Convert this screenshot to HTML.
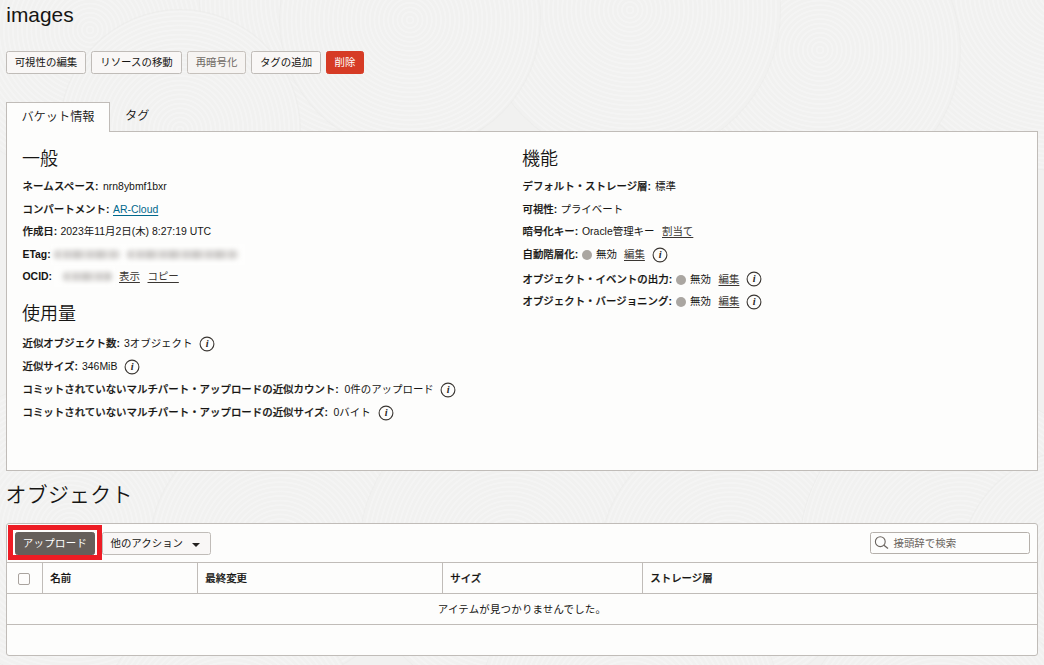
<!DOCTYPE html>
<html lang="ja">
<head>
<meta charset="utf-8">
<title>images - バケットの詳細</title>
<style>
*{box-sizing:border-box;margin:0;padding:0}
html,body{width:1044px;height:665px;overflow:hidden}
body{position:relative;background:#f1f1f0;color:#161513;
  font-family:"Liberation Sans","Noto Sans CJK JP",sans-serif;font-size:10.45px;line-height:14px}
.tex{position:absolute;left:0;top:0;width:1044px;height:665px;overflow:hidden;z-index:0}
.tex i{position:absolute;display:block;border-radius:50%;background:#f1f1f0 repeating-radial-gradient(circle,rgba(255,255,255,0) 0,rgba(255,255,255,0) 2.2px,rgba(255,255,255,.24) 2.8px,rgba(255,255,255,.24) 4px,rgba(255,255,255,0) 4.6px);box-shadow:0 0 0 1px rgba(235,235,233,.6)}
.abs{position:absolute;white-space:nowrap}
h1,h2{font-weight:400;position:absolute;white-space:nowrap;z-index:1}
h1.title{left:6.3px;top:2px;font-size:20.9px;line-height:26px}
h1.section{left:5.5px;top:480px;font-size:20.9px;line-height:30px;font-weight:350;letter-spacing:.3px}
/* buttons */
.btn{position:absolute;top:51px;height:23px;border:1px solid #c0bcb8;border-radius:2.5px;background:#f9f7f6;
  font:inherit;color:#161513;text-align:center;line-height:21px;white-space:nowrap;padding:0}
.btn.disabled{color:#6f6964;border-color:#c6c1bc;background:#f6f4f2}
.btn.danger{background:#d63b25;border-color:#d63b25;color:#fff}
.btn.dark{background:#665f5b;border-color:#665f5b;color:#fff}
/* tabs */
.tab{position:absolute;top:102px;height:30px;line-height:28px;font-size:12.2px;white-space:nowrap;font-weight:350}
.tab.active{left:6px;width:104px;background:#fdfdfc;border:1px solid #c0bcb8;border-bottom:0;text-align:center;z-index:2}
.panel{position:absolute;left:6px;width:1032px;background:#fdfdfc;border:1px solid #c0bcb8}
.info{top:131px;height:340px}
.info h2{font-size:18px;line-height:22px;font-weight:350}
.row{position:absolute;left:0;right:0;height:16px;line-height:16px;white-space:nowrap}
.row>*{position:absolute;top:0}
.row b{font-weight:500;-webkit-text-stroke:.22px #161513}
.row b.lat,.row b .c{font-weight:700;-webkit-text-stroke:0}
a{color:#3a3632;text-decoration:underline;text-underline-offset:1.5px}
a.link{color:#00688c}
.dot{width:10px;height:10px;border-radius:50%;background:#aaa6a1;top:3px !important}
.i{top:-0.5px !important;overflow:visible}
.mask{display:block;background:#fefefd;border-radius:2px}
.smudge{position:absolute;display:block;background:repeating-linear-gradient(90deg,#c6c4c2 0,#d6d4d2 5px,#e6e4e2 8px,#cccac8 13px,#dddbd9 17px,#c6c4c2 23px);filter:blur(2.7px);border-radius:4px}
/* objects */
.objects{top:523px;height:133px;border-radius:3px}
.hl{position:absolute;left:1px;top:1px;width:94px;height:34.5px;border:5px solid #ed1c24}
.search{position:absolute;left:863px;top:8px;width:160px;height:22px;border:1px solid #b5b0ab;border-radius:2.5px;background:#fdfdfc}
.search span{position:absolute;left:22.5px;top:0.5px;line-height:20px;color:#6b6560}
.search svg{position:absolute;left:3px;top:2px}
table{position:absolute;left:-1px;top:38px;width:1032px;border-collapse:collapse;table-layout:fixed}
th,td{border:1px solid #c0bcb8;height:31px;font-size:10.45px;text-align:left;padding:2px 0 0 7.3px;vertical-align:middle}
th{font-weight:500;-webkit-text-stroke:.22px #161513}
td.empty{text-align:center;padding:2.5px 0 0 0;letter-spacing:.2px}
.cb{display:block;width:12px;height:12px;border:1px solid #a9a39e;border-radius:2px;background:#fdfcfb;margin-left:3px}
</style>
</head>
<body>
<div class="tex"><i style="left:-60px;top:-120px;width:300px;height:300px"></i><i style="left:200px;top:-170px;width:340px;height:340px"></i><i style="left:880px;top:-190px;width:360px;height:360px"></i><i style="left:680px;top:-90px;width:280px;height:280px"></i><i style="left:480px;top:-140px;width:300px;height:300px"></i><i style="left:280px;top:-110px;width:260px;height:260px"></i><i style="left:60px;top:10px;width:240px;height:240px"></i><i style="left:-80px;top:380px;width:300px;height:300px"></i><i style="left:150px;top:420px;width:260px;height:260px"></i><i style="left:360px;top:400px;width:300px;height:300px"></i><i style="left:600px;top:430px;width:260px;height:260px"></i><i style="left:800px;top:390px;width:320px;height:320px"></i><i style="left:960px;top:450px;width:240px;height:240px"></i><i style="left:480px;top:560px;width:300px;height:300px"></i><i style="left:100px;top:600px;width:260px;height:260px"></i><i style="left:800px;top:600px;width:280px;height:280px"></i></div>
<h1 class="title">images</h1>

<div class="actions">
  <button class="btn" style="left:6px;width:80px">可視性の編集</button>
  <button class="btn" style="left:91px;width:91px">リソースの移動</button>
  <button class="btn disabled" style="left:187px;width:59px">再暗号化</button>
  <button class="btn" style="left:251px;width:70px">タグの追加</button>
  <button class="btn danger" style="left:326px;width:38px">削除</button>
</div>

<div class="tab active">バケット情報</div>
<div class="tab" style="left:125px">タグ</div>

<div class="panel info">
  <h2 style="left:15px;top:15.7px">一般</h2>
  <div class="row" style="top:47px"><b style="left:15.5px;letter-spacing:.15px">ネームスペース<span class="c">:</span></b><span style="left:96px">nrn8ybmf1bxr</span></div>
  <div class="row" style="top:70px"><b style="left:15.5px">コンパートメント<span class="c">:</span></b><a class="link" href="#" style="left:106px">AR-Cloud</a></div>
  <div class="row" style="top:92px"><b style="left:15.5px">作成日<span class="c">:</span></b><span style="left:53.5px">2023年11月2日(木) 8:27:19 UTC</span></div>
  <div class="row" style="top:115px"><b class="lat" style="left:15.5px">ETag:</b><i class="mask" style="left:44px;top:-3px;width:194px;height:21px"><i class="smudge" style="left:3px;top:6px;width:66px;height:9px"></i><i class="smudge" style="left:76px;top:6px;width:111px;height:9px"></i></i></div>
  <div class="row" style="top:137px"><b class="lat" style="left:15.5px">OCID:</b><i class="mask" style="left:46.5px;top:-3px;width:61px;height:21px"><i class="smudge" style="left:9.5px;top:6px;width:49px;height:9px"></i></i><a href="#" style="left:112px">表示</a><a href="#" style="left:140.5px">コピー</a></div>

  <h2 style="left:15px;top:171px">使用量</h2>
  <div class="row" style="top:204px"><b style="left:15.5px">近似オブジェクト数<span class="c">:</span></b><span style="left:117px">3オブジェクト</span><svg class="i" style="left:191.6px" width="16" height="16" viewBox="0 0 16 16"><circle cx="8" cy="8" r="6.9" fill="none" stroke="#3a3632" stroke-width="1.1"/><text x="8.1" y="11.4" text-anchor="middle" font-family="Liberation Serif,serif" font-style="italic" font-weight="700" font-size="10.3" fill="#2b2826">i</text></svg></div>
  <div class="row" style="top:227px"><b style="left:15.5px">近似サイズ<span class="c">:</span></b><span style="left:75px">346MiB</span><svg class="i" style="left:116.5px" width="16" height="16" viewBox="0 0 16 16"><circle cx="8" cy="8" r="6.9" fill="none" stroke="#3a3632" stroke-width="1.1"/><text x="8.1" y="11.4" text-anchor="middle" font-family="Liberation Serif,serif" font-style="italic" font-weight="700" font-size="10.3" fill="#2b2826">i</text></svg></div>
  <div class="row" style="top:250px"><b style="left:15.5px">コミットされていないマルチパート・アップロードの近似カウント<span class="c">:</span></b><span style="left:337.5px">0件のアップロード</span><svg class="i" style="left:433px" width="16" height="16" viewBox="0 0 16 16"><circle cx="8" cy="8" r="6.9" fill="none" stroke="#3a3632" stroke-width="1.1"/><text x="8.1" y="11.4" text-anchor="middle" font-family="Liberation Serif,serif" font-style="italic" font-weight="700" font-size="10.3" fill="#2b2826">i</text></svg></div>
  <div class="row" style="top:273px"><b style="left:15.5px">コミットされていないマルチパート・アップロードの近似サイズ<span class="c">:</span></b><span style="left:326.5px">0バイト</span><svg class="i" style="left:370.6px" width="16" height="16" viewBox="0 0 16 16"><circle cx="8" cy="8" r="6.9" fill="none" stroke="#3a3632" stroke-width="1.1"/><text x="8.1" y="11.4" text-anchor="middle" font-family="Liberation Serif,serif" font-style="italic" font-weight="700" font-size="10.3" fill="#2b2826">i</text></svg></div>

  <h2 style="left:515px;top:15.7px">機能</h2>
  <div class="row" style="top:47px"><b style="left:515.5px">デフォルト・ストレージ層<span class="c">:</span></b><span style="left:648px">標準</span></div>
  <div class="row" style="top:70px"><b style="left:515.5px">可視性<span class="c">:</span></b><span style="left:553.5px">プライベート</span></div>
  <div class="row" style="top:92px"><b style="left:515.5px">暗号化キー<span class="c">:</span></b><span style="left:575px">Oracle管理キー</span><a href="#" style="left:655px">割当て</a></div>
  <div class="row" style="top:115px"><b style="left:515.5px">自動階層化<span class="c">:</span></b><i class="dot" style="left:575px"></i><span style="left:589px">無効</span><a href="#" style="left:617px">編集</a><svg class="i" style="left:644.6px" width="16" height="16" viewBox="0 0 16 16"><circle cx="8" cy="8" r="6.9" fill="none" stroke="#3a3632" stroke-width="1.1"/><text x="8.1" y="11.4" text-anchor="middle" font-family="Liberation Serif,serif" font-style="italic" font-weight="700" font-size="10.3" fill="#2b2826">i</text></svg></div>
  <div class="row" style="top:139.5px"><b style="left:515.5px">オブジェクト・イベントの出力<span class="c">:</span></b><i class="dot" style="left:669px"></i><span style="left:683px">無効</span><a href="#" style="left:711.5px">編集</a><svg class="i" style="left:739px" width="16" height="16" viewBox="0 0 16 16"><circle cx="8" cy="8" r="6.9" fill="none" stroke="#3a3632" stroke-width="1.1"/><text x="8.1" y="11.4" text-anchor="middle" font-family="Liberation Serif,serif" font-style="italic" font-weight="700" font-size="10.3" fill="#2b2826">i</text></svg></div>
  <div class="row" style="top:162px"><b style="left:515.5px">オブジェクト・バージョニング<span class="c">:</span></b><i class="dot" style="left:669px"></i><span style="left:683px">無効</span><a href="#" style="left:711.5px">編集</a><svg class="i" style="left:739px" width="16" height="16" viewBox="0 0 16 16"><circle cx="8" cy="8" r="6.9" fill="none" stroke="#3a3632" stroke-width="1.1"/><text x="8.1" y="11.4" text-anchor="middle" font-family="Liberation Serif,serif" font-style="italic" font-weight="700" font-size="10.3" fill="#2b2826">i</text></svg></div>
</div>

<h1 class="section">オブジェクト</h1>

<div class="panel objects">
  <div class="hl"></div>
  <button class="btn dark" style="left:8px;top:8px;width:80px;letter-spacing:.35px">アップロード</button>
  <button class="btn" style="left:95px;top:8px;width:109px;text-align:left;padding-left:7.5px">他のアクション<svg style="position:absolute;left:88.8px;top:9.5px" width="8" height="4" viewBox="0 0 8 4"><path d="M0 0H8L4 4Z" fill="#24211f"/></svg></button>
  <div class="search"><svg width="16" height="16" viewBox="0 0 16 16"><circle cx="6.3" cy="6.7" r="4.9" fill="none" stroke="#6b6560" stroke-width="1.1"/><path d="M9.9 10.2 L14 13.6" stroke="#6b6560" stroke-width="1.3" fill="none"/></svg><span>接頭辞で検索</span></div>
  <table>
    <colgroup><col style="width:36px"><col style="width:155px"><col style="width:245px"><col style="width:200px"><col></colgroup>
    <tr><th style="padding-left:8px"><span class="cb"></span></th><th>名前</th><th>最終変更</th><th>サイズ</th><th>ストレージ層</th></tr>
    <tr><td class="empty" colspan="5">アイテムが見つかりませんでした。</td></tr>
  </table>
</div>
</body>
</html>
